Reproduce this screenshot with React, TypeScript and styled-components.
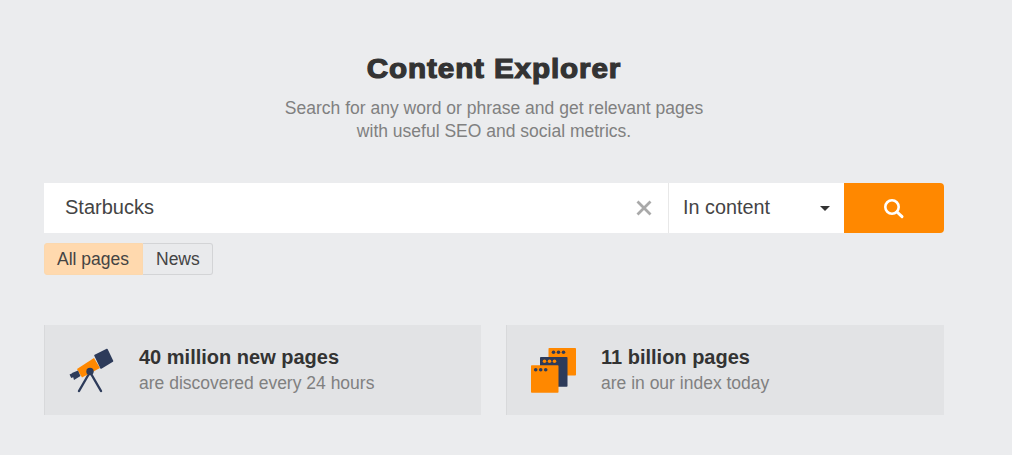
import React from "react";
import styled, { createGlobalStyle } from "styled-components";

const Global = createGlobalStyle`
  html, body { margin: 0; padding: 0; background: #ebecee; }
  body { font-family: "Liberation Sans", Arial, sans-serif; }
`;

const Page = styled.div`
  width: 1012px;
  height: 455px;
  overflow: hidden;
  box-sizing: border-box;
  padding: 49px 68px 0 44px;
  display: flex;
  flex-direction: column;
`;

const Intro = styled.header`
  display: flex;
  flex-direction: column;
  align-items: center;
`;

const Title = styled.h1`
  margin: 0;
  font-size: 28px;
  line-height: 40px;
  font-weight: 700;
  color: #333;
  font-family: "Liberation Sans", Arial, sans-serif;
  -webkit-text-stroke: 1.2px #333;
  letter-spacing: 0.8px;
  transform: scaleX(1.06);
`;

const Subtitle = styled.p`
  margin: 8px 0 0;
  font-size: 17.5px;
  line-height: 23px;
  color: #808080;
  text-align: center;
`;

const SearchBar = styled.div`
  margin-top: 40px;
  display: flex;
  height: 50px;
`;

const QueryBox = styled.div`
  flex: 1;
  background: #fff;
  display: flex;
  align-items: center;
  justify-content: space-between;
  padding: 0 15px 0 21px;
  font-size: 20px;
  color: #444;
`;

const FieldText = styled.span`
  padding-bottom: 2px;
`;

const ModeBox = styled.div`
  width: 176px;
  box-sizing: border-box;
  background: #fff;
  border-left: 1px solid #e8e8e8;
  display: flex;
  align-items: center;
  justify-content: space-between;
  padding: 0 14px;
  font-size: 19.8px;
  color: #444;
`;

const Caret = styled.span`
  width: 0;
  height: 0;
  border-left: 5px solid transparent;
  border-right: 5px solid transparent;
  border-top: 5px solid #333;
`;

const SearchButton = styled.button`
  width: 100px;
  padding: 0;
  border: 0;
  border-radius: 0 4px 4px 0;
  background: #ff8800;
  display: flex;
  align-items: center;
  justify-content: center;
`;

const Tabs = styled.div`
  margin-top: 10px;
  display: flex;
  align-self: flex-start;
`;

const Tab = styled.div<{ $active?: boolean }>`
  box-sizing: border-box;
  height: 32px;
  display: flex;
  align-items: center;
  font-size: 17.5px;
  color: #444;
  padding: 0 ${(p) => (p.$active ? "13px" : "12px")} 0 ${(p) => (p.$active ? "12px" : "13px")};
  border: 1px solid ${(p) => (p.$active ? "#fbd8ae" : "#d3d4d6")};
  background: ${(p) => (p.$active ? "#ffd9ae" : "#e9eaec")};
  border-radius: ${(p) => (p.$active ? "3px 0 0 3px" : "0 3px 3px 0")};
  ${(p) => (p.$active ? "" : "border-left: 0;")}
`;

const Cards = styled.div`
  margin-top: 50px;
  display: grid;
  grid-template-columns: 437px 438px;
  column-gap: 25px;
`;

const Card = styled.div`
  height: 90px;
  box-sizing: border-box;
  background: #e2e3e5;
  border-left: 1px solid #d8d9db;
  display: flex;
  align-items: center;
  padding-left: 21px;
`;

const IconSlot = styled.div`
  width: 50px;
  height: 50px;
  margin-right: 23px;
  flex: none;
  display: flex;
`;

const CardText = styled.div`
  display: flex;
  flex-direction: column;
`;

const CardTitle = styled.div`
  font-size: 20px;
  line-height: 26px;
  font-weight: 700;
  color: #333;
`;

const CardSub = styled.div`
  font-size: 17.5px;
  line-height: 26px;
  color: #808080;
`;

const Icon = styled.svg`
  overflow: visible;
`;

const Telescope = () => (
  <Icon width="50" height="50" viewBox="0 0 50 50" fill="none">
    <g transform="translate(-66 -345)">
      <path d="M90 372 L79 391 M90 372 L101 391" stroke="#2d3b5a" strokeWidth="2.4" strokeLinecap="round" />
      <path d="M77 369 L94 358 L100 368 L82 377.5 Z" fill="#ff8800" />
      <path d="M72 373 L78 370.5 L80.5 376 L74 380 Z" fill="#2d3b5a" />
      <rect x="70" y="373.5" width="3.5" height="4" fill="#2d3b5a" transform="rotate(-25 72 375)" />
      <path d="M95 355.5 L107 349.5 L112.5 361 L101 368 Z" fill="#2d3b5a" stroke="#2d3b5a" strokeWidth="1.6" strokeLinejoin="round" />
      <circle cx="90" cy="371.5" r="3.7" fill="#2d3b5a" />
    </g>
  </Icon>
);

const Dots = ({ x, y, fill }: { x: number; y: number; fill: string }) => (
  <g fill={fill}>
    <circle cx={x} cy={y} r="1.8" />
    <circle cx={x + 5} cy={y} r="1.8" />
    <circle cx={x + 10} cy={y} r="1.8" />
  </g>
);

const Windows = () => (
  <Icon width="50" height="50" viewBox="0 0 50 50">
    <g transform="translate(-528 -345)">
      <rect x="548.5" y="348" width="27.5" height="27.5" rx="0.8" fill="#ff8800" />
      <Dots x={553.5} y={352.3} fill="#2d3b5a" />
      <rect x="540" y="357" width="27.5" height="29.7" rx="0.8" fill="#2d3b5a" />
      <Dots x={544.5} y={361.3} fill="#ff8800" />
      <rect x="531" y="365.3" width="27.5" height="27.5" rx="0.8" fill="#ff8800" />
      <Dots x={535.7} y={369.7} fill="#2d3b5a" />
    </g>
  </Icon>
);

export default function App() {
  return (
    <Page>
      <Global />
      <Intro>
        <Title>Content Explorer</Title>
        <Subtitle>
          Search for any word or phrase and get relevant pages
          <br />
          with useful SEO and social metrics.
        </Subtitle>
      </Intro>
      <SearchBar>
        <QueryBox>
          <FieldText>Starbucks</FieldText>
          <svg width="18" height="18" viewBox="0 0 18 18">
            <path d="M2.5 2.5 L15.5 15.5 M15.5 2.5 L2.5 15.5" stroke="#a9a9a9" strokeWidth="2.8" />
          </svg>
        </QueryBox>
        <ModeBox>
          <FieldText>In content</FieldText>
          <Caret />
        </ModeBox>
        <SearchButton aria-label="Search">
          <svg width="22" height="22" viewBox="0 0 22 22" fill="none">
            <circle cx="9" cy="10" r="6.7" stroke="#fff" strokeWidth="2.6" />
            <path d="M14 15 L19 19.7" stroke="#fff" strokeWidth="3" strokeLinecap="round" />
          </svg>
        </SearchButton>
      </SearchBar>
      <Tabs>
        <Tab $active>All pages</Tab>
        <Tab>News</Tab>
      </Tabs>
      <Cards>
        <Card>
          <IconSlot>
            <Telescope />
          </IconSlot>
          <CardText>
            <CardTitle>40 million new pages</CardTitle>
            <CardSub>are discovered every 24 hours</CardSub>
          </CardText>
        </Card>
        <Card>
          <IconSlot>
            <Windows />
          </IconSlot>
          <CardText>
            <CardTitle>11 billion pages</CardTitle>
            <CardSub>are in our index today</CardSub>
          </CardText>
        </Card>
      </Cards>
    </Page>
  );
}
